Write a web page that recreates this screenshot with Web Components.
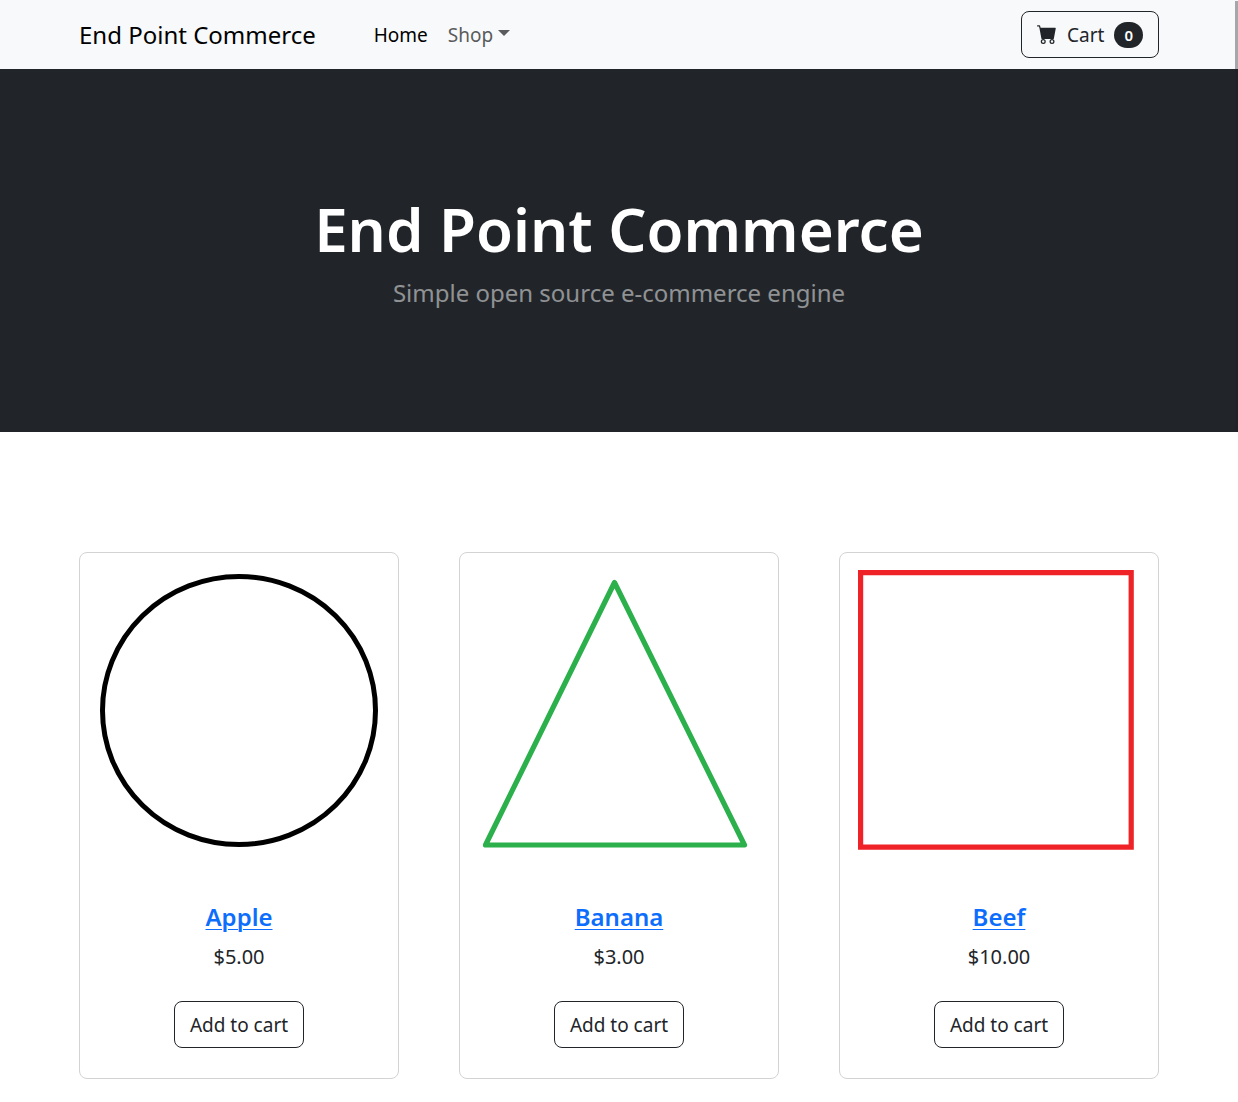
<!DOCTYPE html>
<html lang="en">
<head>
<meta charset="utf-8">
<meta name="viewport" content="width=device-width, initial-scale=1">
<title>End Point Commerce</title>
<style>
body { margin: 0; position: relative; background: #fff; color: #212529; font: 400 19px/30px "Noto Sans", "Open Sans", sans-serif; }
</style>
</head>
<body>
<shop-header brand="End Point Commerce"></shop-header>
<main>
<shop-hero><span slot="title">End Point Commerce</span><span slot="tagline">Simple open source e-commerce engine</span></shop-hero>
<product-grid>
<product-card name="Apple" price="$5.00">
<svg viewBox="0 0 318 318" role="img" aria-label="Apple"><ellipse cx="159" cy="157.500" rx="136.500" ry="134" fill="none" stroke="#000" stroke-width="5"/></svg>
</product-card>
<product-card name="Banana" price="$3.00">
<svg viewBox="0 0 318 318" role="img" aria-label="Banana"><path d="M154.500 29.500 284.500 292H25.500Z" fill="none" stroke="#2bb04c" stroke-width="5.200" stroke-linejoin="round"/></svg>
</product-card>
<product-card name="Beef" price="$10.00">
<svg viewBox="0 0 318 318" role="img" aria-label="Beef"><path d="M20.600 19.600H291.200V294.200H20.600Z" fill="none" stroke="#ee2227" stroke-width="5.200"/></svg>
</product-card>
</product-grid>
</main>
<scroll-thumb></scroll-thumb>
<script>
const define = (name, html, setup) => {
  const template = document.createElement('template');
  template.innerHTML = html;
  customElements.define(name, class extends HTMLElement {
    constructor() {
      super();
      this.attachShadow({ mode: 'open' }).append(template.content.cloneNode(true));
    }
    connectedCallback() {
      if (setup) setup(this, this.shadowRoot);
    }
  });
};

define('outline-button', `
<style>
:host { display: inline-flex; }
button { display: inline-flex; align-items: center; gap: 10px; box-sizing: border-box; height: 47px; padding: 0 15px; border: 1px solid #212529; border-radius: 8px; background: transparent; color: #212529; font: inherit; cursor: pointer; }
button:hover { background: #212529; color: #fff; }
</style>
<button type="button"><slot></slot></button>`);

define('shop-header', `
<style>
:host { display: block; background: #f8f9fa; }
nav { display: flex; align-items: center; box-sizing: border-box; max-width: 1200px; margin: 0 auto; padding: 11px 60px; }
a { color: #000; text-decoration: none; white-space: nowrap; }
.brand { font-size: 24px; margin-right: 58px; }
ul { display: flex; gap: 20px; list-style: none; margin: 0; padding: 0; flex: 1; }
.menu { color: #595b5c; }
.menu::after { content: ""; display: inline-block; margin-left: 5px; vertical-align: 6px; border: 6px solid transparent; border-top-color: currentColor; border-bottom: 0; }
svg { width: 20px; height: 20px; padding-bottom: 2px; fill: currentColor; }
.badge { border-radius: 13px; background: #212529; color: #fff; font-size: 15px; font-weight: 600; line-height: 26px; padding: 0 10px; }
</style>
<nav>
<a class="brand" href="#"></a>
<ul><li><a href="#" aria-current="page">Home</a></li><li><a class="menu" href="#" aria-haspopup="true">Shop</a></li></ul>
<outline-button>
<svg viewBox="0 0 16 16" aria-hidden="true"><path d="M0 1.500A.5.5 0 0 1 .5 1H2a.5.5 0 0 1 .485.379L2.890 3H14.500a.5.5 0 0 1 .491.592l-1.500 8A.5.5 0 0 1 13 12H4a.5.5 0 0 1-.491-.408L2.010 3.607 1.610 2H.5a.5.5 0 0 1-.5-.5M5 12a2 2 0 1 0 0 4 2 2 0 0 0 0-4m7 0a2 2 0 1 0 0 4 2 2 0 0 0 0-4m-7 1a1 1 0 1 1 0 2 1 1 0 0 1 0-2m7 0a1 1 0 1 1 0 2 1 1 0 0 1 0-2"/></svg>
<span>Cart</span><span class="badge">0</span>
</outline-button>
</nav>`, (host, root) => {
  root.querySelector('.brand').textContent = host.getAttribute('brand');
});

define('shop-hero', `
<style>
:host { display: block; padding: 120px 60px; background: #212529; color: #fff; text-align: center; }
h1 { margin: 0 0 5px; font-size: 60px; line-height: 80px; font-weight: 600; }
p { margin: 0; font-size: 24px; line-height: 38px; color: rgba(255, 255, 255, .5); }
</style>
<h1><slot name="title"></slot></h1>
<p><slot name="tagline"></slot></p>`);

define('product-grid', `
<style>
:host { display: grid; grid-template-columns: repeat(auto-fit, minmax(240px, 1fr)); gap: 60px; box-sizing: border-box; max-width: 1200px; margin: 0 auto; padding: 120px 60px 23px; }
</style>
<slot></slot>`);

define('product-card', `
<style>
:host { display: flex; flex-direction: column; border: 1px solid #d3d3d4; border-radius: 8px; background: #fff; text-align: center; }
::slotted(svg) { display: block; width: 100%; }
.body { display: flex; flex-direction: column; align-items: center; padding: 30px; }
h2 { margin: 0 0 8px; font-size: 24px; line-height: 32px; font-weight: 600; }
a { color: #0d6efd; text-decoration-thickness: 1px; text-underline-offset: 3px; }
p { margin: 0 0 28px; font-size: 20px; line-height: 32px; }
</style>
<slot></slot>
<div class="body"><h2><a href="#"></a></h2><p></p><outline-button>Add to cart</outline-button></div>`, (host, root) => {
  root.querySelector('a').textContent = host.getAttribute('name');
  root.querySelector('p').textContent = host.getAttribute('price');
});

/* Translucent scroll indicator laid over the right edge of the page */
define('scroll-thumb', `
<style>
:host { position: absolute; top: 1px; right: 0; width: 3px; height: 430px; background: rgba(35, 31, 35, .38); pointer-events: none; }
</style>`);
</script>
</body>
</html>
